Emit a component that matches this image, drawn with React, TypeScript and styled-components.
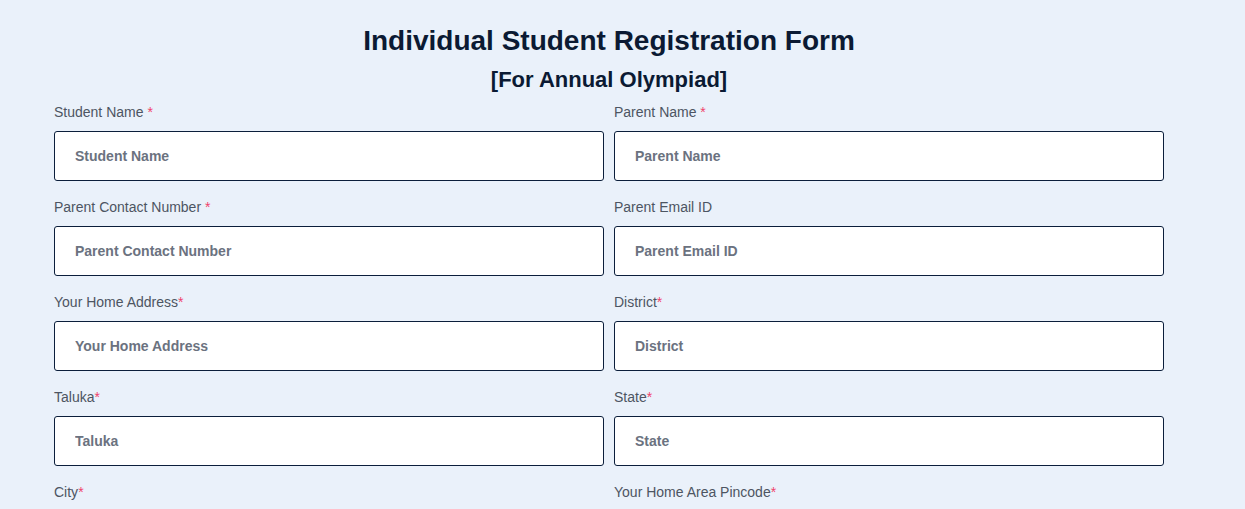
import React from "react";
import styled, { createGlobalStyle } from "styled-components";

const GlobalStyle = createGlobalStyle`
  html, body {
    margin: 0;
    padding: 0;
    background: #eaf1fa;
    font-family: "Liberation Sans", Arial, sans-serif;
  }
`;

const fields: { label: string; star?: "spaced" | "tight" }[][] = [
  [
    { label: "Student Name", star: "spaced" },
    { label: "Parent Name", star: "spaced" },
  ],
  [
    { label: "Parent Contact Number", star: "spaced" },
    { label: "Parent Email ID" },
  ],
  [
    { label: "Your Home Address", star: "tight" },
    { label: "District", star: "tight" },
  ],
  [
    { label: "Taluka", star: "tight" },
    { label: "State", star: "tight" },
  ],
  [
    { label: "City", star: "tight" },
    { label: "Your Home Area Pincode", star: "tight" },
  ],
];

export default function App() {
  return (
    <>
      <GlobalStyle />
      <Page>
        <FormWrap>
          <Title>Individual Student Registration Form</Title>
          <Subtitle>[For Annual Olympiad]</Subtitle>
          <Grid>
            {fields.flat().map((f) => (
              <Field key={f.label}>
                <Label>
                  {f.label}
                  {f.star && <Star>{f.star === "spaced" ? " *" : "*"}</Star>}
                </Label>
                <Input placeholder={f.label} />
              </Field>
            ))}
          </Grid>
        </FormWrap>
      </Page>
    </>
  );
}

const Page = styled.div`
  padding: 23px 0 0 54px;
  height: 509px;
  box-sizing: border-box;
  overflow: hidden;
`;

const FormWrap = styled.div`
  width: 1110px;
`;

const Title = styled.h1`
  margin: 0;
  text-align: center;
  font-size: 28px;
  line-height: 36px;
  font-weight: 700;
  color: #0b1a33;
`;

const Subtitle = styled.h2`
  margin: 6px 0 0;
  text-align: center;
  font-size: 22px;
  line-height: 30px;
  font-weight: 700;
  color: #0b1a33;
`;

const Grid = styled.div`
  display: grid;
  grid-template-columns: 1fr 1fr;
  column-gap: 10px;
  row-gap: 16px;
  margin-top: 7px;
`;

const Field = styled.div`
  display: flex;
  flex-direction: column;
`;

const Label = styled.label`
  font-size: 14px;
  line-height: 20px;
  color: #4d5562;
  margin-bottom: 9px;
`;

const Star = styled.span`
  color: #f0436b;
  white-space: pre;
`;

const Input = styled.input`
  box-sizing: border-box;
  height: 50px;
  width: 100%;
  border: 1px solid #0b1e3b;
  border-radius: 3px;
  background: #fff;
  padding: 0 20px;
  font-family: "Liberation Sans", Arial, sans-serif;
  font-size: 14px;
  font-weight: 700;
  outline: none;

  &::placeholder {
    color: #6b7280;
    font-weight: 700;
  }
`;
